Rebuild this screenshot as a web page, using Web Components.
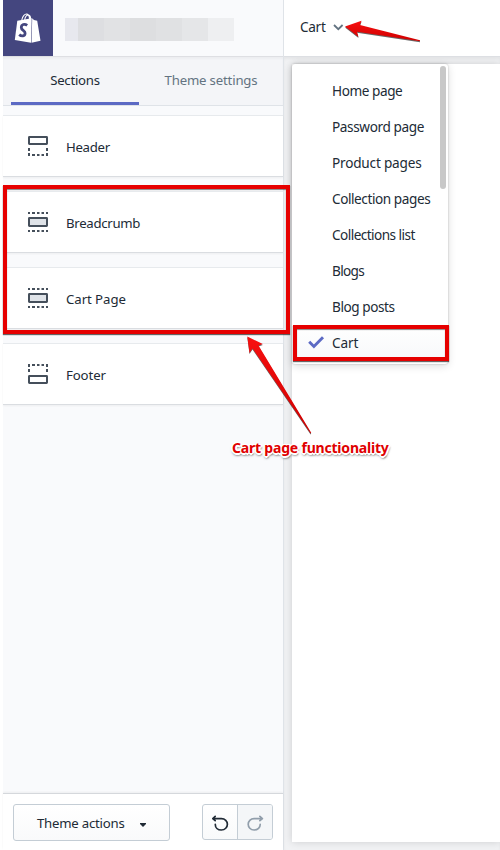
<!DOCTYPE html>
<html lang="en"><head><meta charset="utf-8"><title>Theme editor</title>
<style>
html,body{margin:0;height:850px;overflow:hidden;background:#fff}
body{font:13.2px/20px "Noto Sans","Open Sans",sans-serif;color:#212b36}
</style></head><body>
<theme-editor></theme-editor>
<script>
const define=(name,html,setup)=>customElements.define(name,class extends HTMLElement{
  connectedCallback(){
    if(this.shadowRoot)return;
    const t=document.createElement('template');t.innerHTML=html;
    this.attachShadow({mode:'open'}).append(t.content.cloneNode(true));
    if(setup)setup.call(this,this.shadowRoot);
  }
});

define('shop-logo',`<style>:host{display:block;width:50px;height:56px;background:#44467f;flex:none}svg{display:block}</style>
<svg width="50" height="56" viewBox="0 0 50 56">
<path d="M18.8 20C19.5 16 22 13.7 24 14.1C26 14.6 26.6 17 26.5 20M21.7 20C22.2 16.5 24 14.8 25.6 15C27.5 15.3 27.6 17.5 27.7 19" fill="none" stroke="#fff" stroke-width="1.1"/>
<path d="M14.3 20.8L28.7 18.3L28.1 42.8L11.8 39.9Z" fill="#fff"/><path d="M29.2 18.3L31 20.1L34.2 20.8L37.5 40.7L28.6 42.8Z" fill="#fff"/>
<path d="M24.2 25.3C21.5 23.4 18.4 24.4 18.3 27.5C18.2 30.3 22.3 30.4 22.1 33.2C22 36.3 18.6 36.7 16.2 34.6" fill="none" stroke="#44467f" stroke-width="2.8"/></svg>`);

define('masked-name',`<style>:host{display:flex;height:23px;margin-left:12px}i{width:26px}i:first-of-type{width:13px}</style>
<i style="background:#e7e8ee"></i><i style="background:#dddee1"></i><i style="background:#e1e2e4"></i><i style="background:#dddee0"></i><i style="background:#e0e1e3"></i><i style="background:#e5e6e8"></i><i style="background:#eeeff1"></i>`);

define('tab-item',`<style>:host{display:block;box-sizing:border-box;height:48px;padding-top:13px;text-align:center;width:128px;color:#637381;border-bottom:3px solid transparent;white-space:nowrap}
:host([active]){color:#212b36;border-color:#5c6ac4}span{letter-spacing:var(--ls,0)}</style><span><slot></slot></span>`);

define('section-icon',`<style>:host{display:block;width:20px;height:20px;flex:none}svg{display:block}</style><svg width="20" height="20" fill="none" stroke="#454f5b" stroke-width="2"></svg>`,function(r){
  const k=this.getRootNode().host.getAttribute('kind'),s=r.querySelector('svg');
  const dots=y=>`<path d="M0 ${y}H2M4 ${y}H7M9 ${y}H11.5M13.5 ${y}H16M18 ${y}H20"/>`;
  s.innerHTML=k==='header'?`<rect x="1" y="1" width="18" height="7" rx=".4"/><path d="M1 12v3M19 12v3M1 17v2M19 17v2"/>${dots(19)}`:
  k==='footer'?`<rect x="1" y="12" width="18" height="7" rx=".4"/><path d="M1 1v2M19 1v2M1 5v3M19 5v3"/>${dots(1)}`:
  `${dots(1)}<rect x="1" y="6" width="18" height="8" rx=".4" fill="#dfe3e8"/>${dots(19)}`;
});

define('section-row',`<style>:host{display:flex;align-items:center;box-sizing:border-box;height:62px;padding:2px 0 0 25px;gap:18px;background:#fff;border-top:1px solid #e7eaed;border-bottom:1px solid #dadde1;box-shadow:0 1px 2px #0000000d}
span{letter-spacing:var(--ls,0)}section-icon{margin-top:-3px}</style><section-icon></section-icon><span><slot></slot></span>`);

define('action-bar',`<style>:host{display:flex;box-sizing:border-box;height:57px;border-top:1px solid #d5d8dc;box-shadow:0 -1px 2px #0000000d;padding:10px 10px 0;justify-content:space-between;background:#fff}
.menu{display:flex;align-items:center;box-sizing:border-box;width:157px;height:37px;padding:0 22px 0 23px;justify-content:space-between;border:1px solid #c4cdd5;border-radius:3px;background:linear-gradient(#fff,#f9fafb)}
.menu svg{margin-top:4px}
.menu span{letter-spacing:var(--ls,0)}.pair{display:flex;box-sizing:border-box;width:71px;height:36px;border:1px solid #c4cdd5;border-radius:3px;overflow:hidden;background:linear-gradient(#fff,#f9fafb)}
.pair div{width:34px}.pair .off{width:34px;border-left:1px solid #c4cdd5;background:#f4f6f8}svg{display:block}</style>
<div class="menu"><span style="--ls:-.23px">Theme actions</span><svg width="8" height="6"><path d="M1 1H7V2L4 5L1 2Z" fill="#212b36"/></svg></div>
<div class="pair"><div><svg width="34" height="34" viewBox="0 .6 34 34" fill="none" stroke="#212b36" stroke-width="1.7" stroke-linecap="round" stroke-linejoin="round"><path d="M12.2 12L9.8 14.2L12.2 16.3M10.2 14.2H18.4C22 14.2 24.4 16.8 24.4 19.8S22 25.6 18.3 25.6C14.6 25.6 12.3 23 12.3 20"/></svg></div>
<div class="off"><svg width="34" height="34" viewBox="0 .6 34 34" fill="none" stroke="#919eab" stroke-width="1.7" stroke-linecap="round" stroke-linejoin="round"><path d="M21.9 12L24.4 14.2L21.9 16.3M24 14.2H16.1C12.5 14.2 10.2 16.8 10.2 19.8S12.5 25.6 16.1 25.6C19.8 25.6 22.2 23 22.2 20"/></svg></div></div>`);

define('editor-sidebar',`<style>:host{display:flex;flex-direction:column;width:280px;height:850px;background:#f9fafc;border-right:1px solid #dfe3e8;flex:none}
header{display:flex;align-items:center;height:56px;border-bottom:1px solid #dedfe3}masked-name{margin-top:3px}
nav{display:flex;box-sizing:border-box;height:49px;padding:0 8px;background:#f4f5f8;border-bottom:1px solid #dfe3e8;justify-content:space-between;box-shadow:inset 0 2px 2px #00000008}
main{flex:1;display:flex;flex-direction:column;gap:14px;padding-top:9px}</style>
<header><shop-logo></shop-logo><masked-name></masked-name></header>
<nav><tab-item active style="--ls:-.25px">Sections</tab-item><tab-item style="--ls:-.18px">Theme settings</tab-item></nav>
<main><section-row kind="header" style="--ls:-.3px">Header</section-row><section-row kind="body" style="--ls:-.3px">Breadcrumb</section-row><section-row kind="body" style="--ls:-.05px">Cart Page</section-row><section-row kind="footer" style="--ls:-.1px">Footer</section-row></main>
<action-bar></action-bar>`);

define('menu-option',`<style>:host{display:flex;align-items:center;box-sizing:border-box;height:36px;padding-left:16px;white-space:nowrap;font-size:13.6px}
svg{width:17px;height:14px;margin-right:7px;margin-top:-2px;visibility:hidden}:host([selected]) svg{visibility:visible}:host([selected]){background:linear-gradient(#fff,#f7f8fa)}span{letter-spacing:var(--ls,-.43px)}</style>
<svg viewBox="0 0 17 14"><path d="M1.2 6.8L5.9 11.5L15 2.2" fill="none" stroke="#5c6ac4" stroke-width="2.9"/></svg><span><slot></slot></span>`);

define('page-menu',`<style>:host{position:absolute;left:292px;top:64px;width:156px;height:300px;box-sizing:border-box;padding-top:9px;background:#fff;border-radius:3px;box-shadow:0 0 2px #0004,0 2px 9px #00000024}
.bar{position:absolute;right:2px;top:2px;width:6px;height:123px;border-radius:3px;background:#c8c8c8}</style>
<menu-option>Home page</menu-option><menu-option style="--ls:-.38px">Password page</menu-option><menu-option style="--ls:-.2px">Product pages</menu-option><menu-option>Collection pages</menu-option><menu-option style="--ls:-.55px">Collections list</menu-option><menu-option style="--ls:-.65px">Blogs</menu-option><menu-option>Blog posts</menu-option><menu-option selected style="--ls:-.15px">Cart</menu-option><div class="bar"></div>`);

define('page-preview',`<style>:host{display:flex;flex-direction:column;flex:1;min-width:0}header{display:flex;align-items:center;gap:7px;box-sizing:border-box;height:57px;padding:0 0 2px 16px;border-bottom:1px solid #dddfe3}
span{font-size:13.6px;letter-spacing:-.3px}svg{display:block}main{flex:1;background:#f1f2f4;padding:7px 0 8px 8px;box-shadow:inset 0 2px 3px #0000000d;overflow:hidden}section{height:778px;background:#fff;box-shadow:0 0 8px #00000026}</style>
<header><span>Cart</span><svg width="12" height="8"><path d="M1 2L5.3 6.2L9.6 2" fill="none" stroke="#637381" stroke-width="1.8"/></svg></header><main><section></section></main>`);

define('red-marker',`<style>:host{position:absolute;box-sizing:border-box;border:4px solid #e60000;box-shadow:0 1px 1px #0009,inset 0 1px 1px #0007}</style>`);
define('red-arrow',`<style>:host{position:absolute;left:0;top:0}svg{display:block;filter:drop-shadow(0 1px .7px #0009)}</style><svg width="500" height="480"><defs><linearGradient id="g" x2="0" y2="1"><stop stop-color="#f71010"/><stop offset="1" stop-color="#cf0000"/></linearGradient></defs><path fill="url(#g)"/></svg>`,function(r){r.querySelector('path').setAttribute('d',this.getAttribute('d'))});
define('callout-label',`<style>:host{position:absolute;left:232px;top:438px;font:bold 14px/20px "Noto Sans","Open Sans",sans-serif;color:#e00000;white-space:nowrap;letter-spacing:var(--ls,0);text-shadow:-1px -1px #fff,1px -1px #fff,-1px 1px #fff,1px 1px #fff,0 2px #fff,2px 0 #fff,-2px 0 #fff,0 0 2px #fff,1px 2px 2px #0009,0 2px 3px #0008}</style><slot></slot>`);

define('theme-editor',`<style>:host{display:flex;position:relative;box-sizing:border-box;width:500px;height:850px;padding-left:3px;overflow:hidden}</style>
<editor-sidebar></editor-sidebar><page-preview></page-preview><page-menu></page-menu>
<red-marker style="left:3px;top:185px;width:287px;height:149px"></red-marker>
<red-marker style="left:293px;top:325px;width:156px;height:36px"></red-marker>
<red-arrow d="M345 26.5L361.5 20.8L360 25L420 40.2L420 41.2L357 31.8L358.5 37Z"></red-arrow>
<red-arrow d="M247.3 336.5L262.8 344L258.5 345.5L311.2 432.8L310.6 433.5L252.5 348.5L249.5 353Z"></red-arrow>
<callout-label style="--ls:-.2px">Cart page functionality</callout-label>`);
</script></body></html>
